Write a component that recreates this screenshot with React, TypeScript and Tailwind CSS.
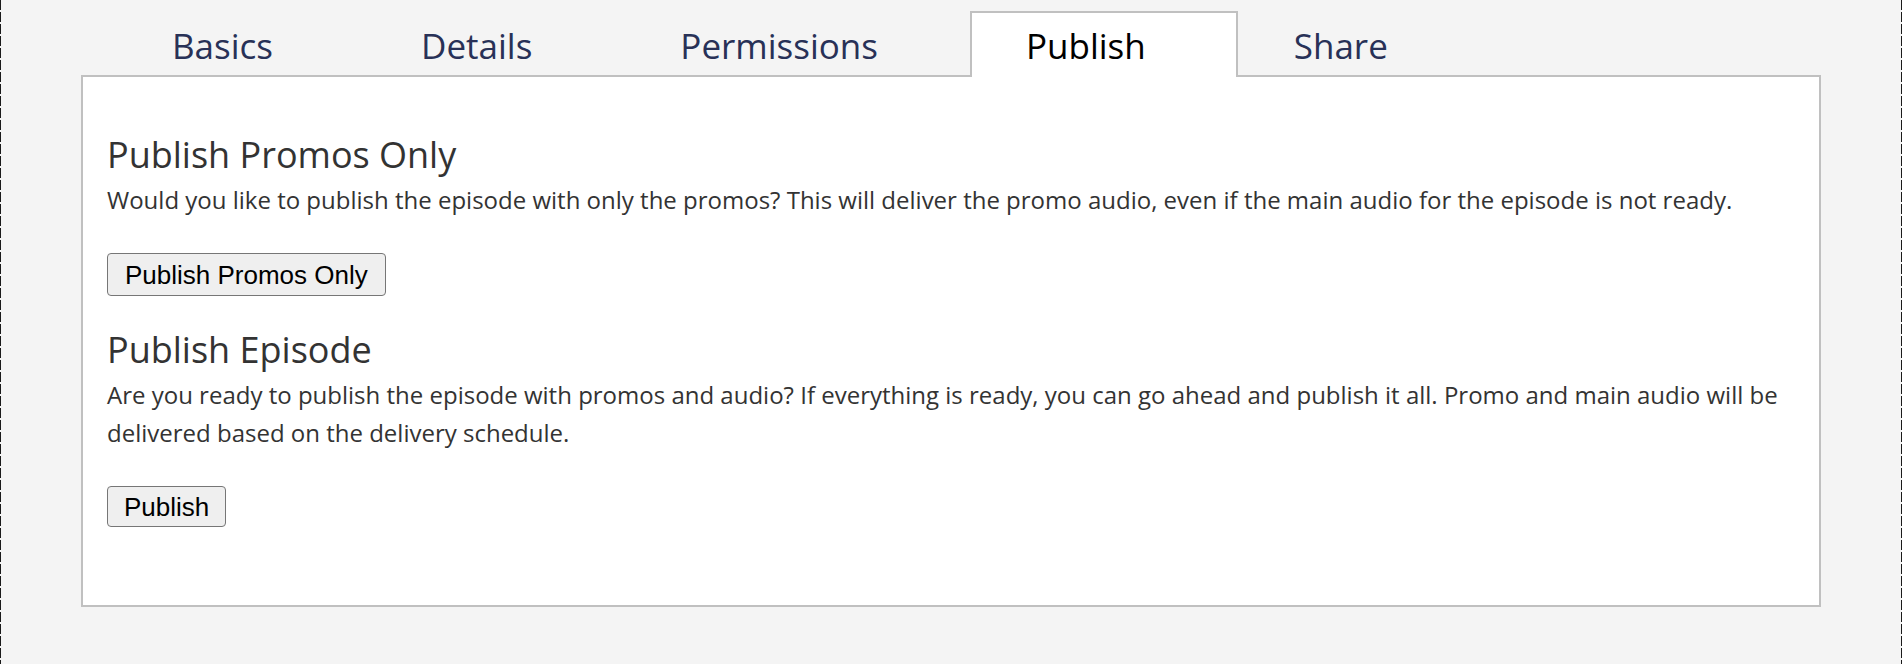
export default function App() {
  const tabs = ["Basics", "Details", "Permissions", "Publish", "Share"];
  return (
    <div className="flex h-[664px] w-[1902px] bg-[#f4f4f4] font-['Open_Sans',sans-serif]">
      <div className="h-full w-px shrink-0 bg-[repeating-linear-gradient(to_bottom,#1a1a1a_0px,#1a1a1a_10px,transparent_10px,transparent_12px)]" />
      <div className="flex-1 pl-[80px] pt-[11px]">
        <div className="w-[1740px]">
          <ul className="relative z-10 flex h-[64px] items-start pl-[35px]">
            {tabs.map((t) => {
              const active = t === "Publish";
              return (
                <li
                  key={t}
                  className={
                    active
                      ? "flex h-[66px] items-start border-2 border-b-0 border-[#c0c0c0] bg-white pl-[54px] pr-[90px] pt-[9px] text-[35px] leading-[48px] text-black"
                      : "flex h-[66px] items-start border-2 border-b-0 border-transparent pl-[54px] pr-[90px] pt-[9px] text-[35px] leading-[48px] text-[#283157]"
                  }
                >
                  {t}
                </li>
              );
            })}
          </ul>
          <div className="h-[532px] border-2 border-[#c0c0c0] bg-white px-[24px] pt-[56px] text-[#333333]">
            <h2 className="text-[36px] leading-[44px]">Publish Promos Only</h2>
            <p className="mt-[4px] text-[24px] leading-[38px]">
              Would you like to publish the episode with only the promos? This will deliver the promo audio, even if the main audio for the episode is not ready.
            </p>
            <button className="mt-[34px] block h-[43px] rounded-[4px] border border-[#767676] bg-[#efefef] px-[17px] font-['Liberation_Sans',Arial,sans-serif] text-[26px] leading-[30px] text-black">
              Publish Promos Only
            </button>
            <h2 className="mt-[32px] text-[36px] leading-[44px]">Publish Episode</h2>
            <p className="mt-[4px] text-[24px] leading-[38px]">
              Are you ready to publish the episode with promos and audio? If everything is ready, you can go ahead and publish it all. Promo and main audio will be delivered based on the delivery schedule.
            </p>
            <button className="mt-[34px] block h-[41px] rounded-[4px] border border-[#767676] bg-[#efefef] px-[16px] font-['Liberation_Sans',Arial,sans-serif] text-[26px] leading-[30px] text-black">
              Publish
            </button>
          </div>
        </div>
      </div>
      <div className="h-full w-px shrink-0 bg-[repeating-linear-gradient(to_bottom,#1a1a1a_0px,#1a1a1a_10px,transparent_10px,transparent_12px)]" />
    </div>
  );
}
